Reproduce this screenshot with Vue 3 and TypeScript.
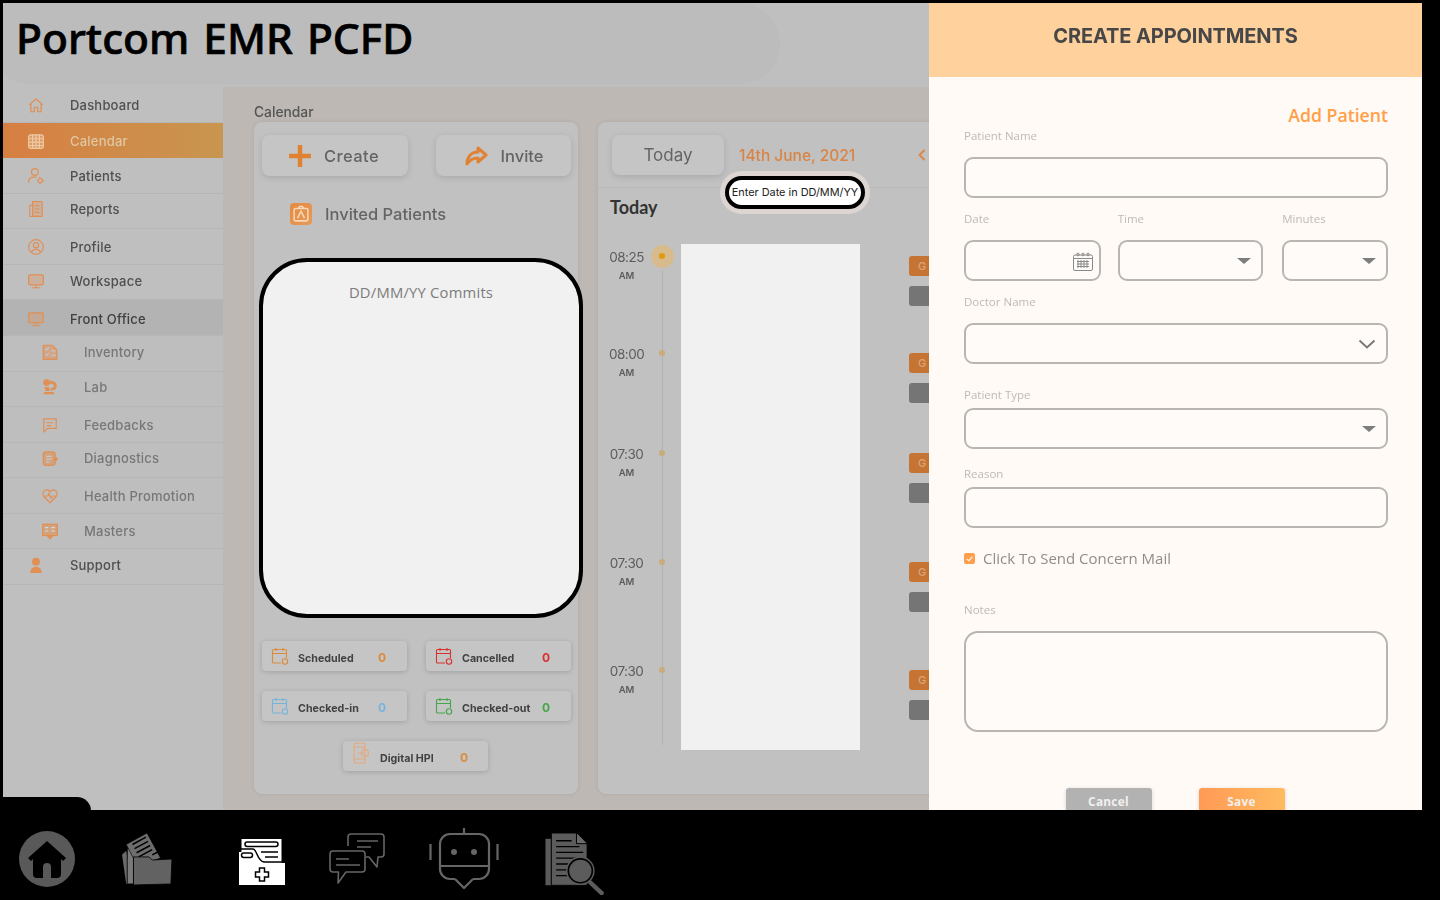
<script setup lang="ts">
const navItems = [
  { label: 'Dashboard', icon: 'home', shift: 'down' },
  { label: 'Calendar', icon: 'calendar', active: true, shift: 'down' },
  { label: 'Patients', icon: 'patient', shift: 'down' },
  { label: 'Reports', icon: 'report', shift: 'up' },
  { label: 'Profile', icon: 'profile' },
  { label: 'Workspace', icon: 'monitor', shift: 'up' },
  { label: 'Front Office', icon: 'monitor', open: true, shift: 'down' },
  { label: 'Inventory', icon: 'inventory', sub: true, shift: 'up' },
  { label: 'Lab', icon: 'lab', sub: true, shift: 'up' },
  { label: 'Feedbacks', icon: 'chat', sub: true, shift: 'down' },
  { label: 'Diagnostics', icon: 'diag', sub: true, shift: 'up' },
  { label: 'Health Promotion', icon: 'heart', sub: true, shift: 'down' },
  { label: 'Masters', icon: 'masters', sub: true },
  { label: 'Support', icon: 'support', shift: 'up' },
]

const stats = [
  { label: 'Scheduled', color: '#dc8a3c' },
  { label: 'Cancelled', color: '#d9322e' },
  { label: 'Checked-in', color: '#76b4dc' },
  { label: 'Checked-out', color: '#45a64a' },
]

const slots = ['08:25', '08:00', '07:30', '07:30', '07:30']
</script>

<template>
  <div class="screen">
    <div class="stage">
      <div class="dimmed">
        <header class="topbar">
          <div class="title-blob"></div>
          <h1 class="title">Portcom EMR PCFD</h1>
        </header>
        <div class="body">
          <nav class="sidebar">
            <div
              v-for="item in navItems"
              :key="item.label"
              class="nav-row"
              :class="[item.shift, { active: item.active, open: item.open, sub: item.sub }]"
            >
              <svg class="nav-icon" viewBox="0 0 16 16" fill="none" stroke="currentColor" stroke-width="1.1">
                <path v-if="item.icon === 'home'" d="M2 8l6-5.500L14 8M3.500 7v7h3v-4h3v4h3V7" />
                <g v-else-if="item.icon === 'calendar'">
                  <rect x="1.500" y="2.500" width="13" height="12" rx="2" fill="currentColor" fill-opacity=".35" />
                  <path d="M1.500 6h13M5 2.500v12M8 2.500v12M11 2.500v12M1.500 9h13M1.500 12h13" />
                </g>
                <g v-else-if="item.icon === 'patient'">
                  <circle cx="7" cy="4.500" r="3" />
                  <path d="M1.500 14v-1.500c0-2 2-3.500 4-3.500h3M11.500 9.500l3 2.500-3 2.500-2-2.500z" />
                </g>
                <g v-else-if="item.icon === 'report'">
                  <path d="M5 1.500h7.500a1 1 0 0 1 1 1V14.500H5z" fill="currentColor" fill-opacity=".3" />
                  <path d="M2.500 4.500H5M2.500 4.500v10H12M7 5h4M7 8h4M7 11h4" />
                </g>
                <g v-else-if="item.icon === 'profile'">
                  <circle cx="8" cy="8" r="6.500" />
                  <circle cx="8" cy="6.500" r="2.300" />
                  <path d="M3.800 12.800c1-2 2.500-2.800 4.200-2.800s3.200.8 4.200 2.800" />
                </g>
                <g v-else-if="item.icon === 'monitor'">
                  <rect x="1.500" y="2.500" width="13" height="9" rx="1" fill="currentColor" fill-opacity=".3" />
                  <path d="M8 11.500v2.500M4.500 14h7" />
                </g>
                <g v-else-if="item.icon === 'inventory'">
                  <path d="M2 2h8l4 4v8.500H2z" fill="currentColor" fill-opacity=".55" />
                  <path d="M4 5l1 1 2-2M4 10l1 1 2-2M9 7h4M9 11h4" stroke="#c4c4c4" />
                </g>
                <g v-else-if="item.icon === 'lab'" fill="currentColor" stroke="none">
                  <circle cx="5" cy="4" r="3" />
                  <path d="M8 2.500c3.500 0 6 1.500 6 4.500s-2.500 4-5 4l-1-2c2 0 3.500-.5 3.500-2S10 5 8 5z" />
                  <path d="M3 8h4l1 3.500H4zM2.500 12.500h9v2h-9z" />
                </g>
                <path v-else-if="item.icon === 'chat'" d="M2.500 2.500h11v8.500H6L2.500 14zM5 6h6M5 8.500h4" />
                <g v-else-if="item.icon === 'diag'">
                  <rect x="2" y="2.500" width="10.500" height="12" rx="2" fill="currentColor" fill-opacity=".6" />
                  <path d="M4.500 6.500h5M4.500 9h5M4.500 11.500h3" stroke="#c8c8c8" />
                  <circle cx="13" cy="9" r="1.800" fill="currentColor" stroke="none" />
                </g>
                <g v-else-if="item.icon === 'masters'">
                  <rect x="1.500" y="2" width="13" height="10" fill="currentColor" fill-opacity=".6" />
                  <path d="M3.500 5h3M3.500 8h3M9 5h3.500M9 8h3.500" stroke="#d8d8d8" />
                  <path d="M5.500 12L8 15l2.500-3" fill="currentColor" />
                </g>
                <g v-else-if="item.icon === 'support'" fill="currentColor" stroke="none">
                  <circle cx="8" cy="5" r="3.500" />
                  <path d="M3 15c0-3.500 2-5.500 5-5.500s5 2 5 5.500z" />
                </g>
                <path v-else d="M8 14L2.500 8.500C.5 6 2.500 2.500 5 2.500c1.300 0 2.300.7 3 1.800.7-1.100 1.700-1.800 3-1.800 2.500 0 4.500 3.500 2.500 6zM3 8h3l1-2 2 4 1-2h3" />
              </svg>
              <span class="nav-label">{{ item.label }}</span>
            </div>
          </nav>

          <main class="content">
            <div class="crumb">Calendar</div>
            <div class="cards">
              <section class="card card-left">
                <div class="btn-row">
                  <div class="soft-btn create">
                    <svg class="plus" viewBox="0 0 24 24"><path d="M12 1v22M1 12h22" stroke="#e08233" stroke-width="4.500" /></svg>
                    <span>Create</span>
                  </div>
                  <div class="soft-btn invite">
                    <svg class="share" viewBox="0 0 24 24" fill="none" stroke="#e08233" stroke-width="3" stroke-linejoin="round">
                      <path d="M14 4l8 7-8 7v-4c-5 0-8 1.500-11 6 0-7 4-12 11-12z" />
                    </svg>
                    <span>Invite</span>
                  </div>
                </div>
                <div class="invited">
                  <span class="invited-icon">
                    <svg viewBox="0 0 16 16" fill="none" stroke="#f6d8b8" stroke-width="1.100">
                      <rect x="3" y="4" width="10" height="9" rx="1" />
                      <path d="M5.500 11l2.500-5 2.500 5M6 4l1-1.500h2L10 4" />
                    </svg>
                  </span>
                  <span>Invited Patients</span>
                </div>
                <div class="commits">DD/MM/YY Commits</div>
                <div class="stats">
                  <div v-for="s in stats" :key="s.label" class="stat">
                    <svg class="stat-icon" viewBox="0 0 18 18" fill="none" :stroke="s.color" stroke-width="1.100">
                      <path d="M10 16H2.500a1 1 0 0 1-1-1V3.500a1 1 0 0 1 1-1h12a1 1 0 0 1 1 1V11M1.500 6.500h14M5 1v3M12 1v3" />
                      <circle cx="14" cy="14.500" r="2.700" />
                    </svg>
                    <span class="stat-label">{{ s.label }}</span>
                    <span class="stat-count" :style="{ color: s.color }">0</span>
                  </div>
                  <div class="stat stat-wide">
                    <svg class="stat-icon hpi" viewBox="0 0 18 22" fill="none" stroke="#e6a878" stroke-width="1.100">
                      <rect x="2" y="1" width="11" height="20" rx="2" />
                      <path d="M2 5h11M2 17h11M6 11h6" />
                      <circle cx="13" cy="11" r="3.500" />
                    </svg>
                    <span class="stat-label">Digital HPI</span>
                    <span class="stat-count hpi-count">0</span>
                  </div>
                </div>
              </section>

              <section class="card card-right">
                <div class="day-head">
                  <div class="soft-btn today">Today</div>
                  <span class="day-date">14th June, 2021</span>
                  <svg class="prev" viewBox="0 0 8 12" fill="none" stroke="#dd8443" stroke-width="1.800"><path d="M6.500 1L1.500 6l5 5" /></svg>
                </div>
                <div class="today-title">Today</div>
                <div class="timeline">
                  <div class="rail"></div>
                  <div v-for="(t, i) in slots" :key="i" class="slot" :class="'slot-' + i">
                    <div class="slot-time">
                      <div class="hour">{{ t }}</div>
                      <div class="ampm">AM</div>
                    </div>
                    <div class="dot-wrap" :class="{ current: i === 0 }"><span class="dot"></span></div>
                    <div class="slot-tags">
                      <span class="tag tag-orange">G</span>
                      <span class="tag tag-gray"></span>
                    </div>
                  </div>
                  <div class="blank"></div>
                </div>
                <div class="date-pill"><span>Enter Date in DD/MM/YY</span></div>
              </section>
            </div>
          </main>
        </div>
      </div>

      <aside class="panel">
        <div class="panel-head">CREATE APPOINTMENTS</div>
        <form class="form">
          <div class="add-patient">Add Patient</div>
          <label class="lbl lbl-name">Patient Name</label>
          <div class="field"></div>

          <div class="triple">
            <div class="col col-date">
              <label class="lbl">Date</label>
              <div class="field">
                <svg class="cal" viewBox="0 0 22 20" fill="none" stroke="#8a8a8a" stroke-width="1">
                  <rect x="1.500" y="3" width="19" height="15.500" rx="1.500" />
                  <path d="M1.500 6.500h19M5 9.500h12M5 12h12M5 14.500h12M6 8v8M9 8v8M12 8v8M15 8v8" />
                  <circle cx="6" cy="2.500" r="1.300" /><circle cx="11" cy="2.500" r="1.300" /><circle cx="16" cy="2.500" r="1.300" />
                </svg>
              </div>
            </div>
            <div class="col col-time">
              <label class="lbl">Time</label>
              <div class="field"><span class="caret"></span></div>
            </div>
            <div class="col col-min">
              <label class="lbl">Minutes</label>
              <div class="field"><span class="caret"></span></div>
            </div>
          </div>

          <label class="lbl lbl-doctor">Doctor Name</label>
          <div class="field">
            <svg class="chev" viewBox="0 0 18 10" fill="none" stroke="#757575" stroke-width="1.800"><path d="M1.500 1.500L9 8.500l7.500-7" /></svg>
          </div>

          <label class="lbl lbl-type">Patient Type</label>
          <div class="field"><span class="caret"></span></div>

          <label class="lbl lbl-reason">Reason</label>
          <div class="field"></div>

          <div class="check-row">
            <span class="check">
              <svg viewBox="0 0 10 10" fill="none" stroke="#ffe9d2" stroke-width="1.200"><path d="M2.500 5.200l1.800 1.800 3.300-3.600" /></svg>
            </span>
            <span>Click To Send Concern Mail</span>
          </div>

          <label class="lbl lbl-notes">Notes</label>
          <div class="field notes"></div>

          <div class="actions">
            <div class="action cancel">Cancel</div>
            <div class="action save">Save</div>
          </div>
        </form>
      </aside>
    </div>

    <footer class="dock">
      <div class="dock-tab"></div>
      <svg class="dk dk-home" viewBox="0 0 56 56">
        <circle cx="28" cy="28" r="28" fill="#595959" />
        <path d="M28 10L9 27l3 3 2-2v15a4 4 0 0 0 4 4h6V36a4 4 0 0 1 8 0v11h6a4 4 0 0 0 4-4V28l2 2 3-3z" fill="#000" />
      </svg>
      <svg class="dk dk-folder" viewBox="4 3 48 50">
        <path d="M8 20l-4 4 4 28h6z" fill="#6a6a6a" />
        <path d="M9 18h6v34H9z" fill="#7a7a7a" stroke="#000" stroke-width=".8" />
        <path d="M8 14L28 3l13 24-22 8z" fill="#6d6d6d" stroke="#000" stroke-width=".6" />
        <path d="M14 14l13-7M16 18l13-7M18 22l13-7M20 26l13-7M33 24l6-3" stroke="#000" stroke-width="1.500" />
        <path d="M15 26h15l3 3 19-1-1 24-36 1z" fill="#626262" stroke="#000" stroke-width=".8" />
      </svg>
      <svg class="dk dk-chart" viewBox="0 0 46 46">
        <rect x="2.500" y="0" width="40" height="24" fill="#fff" />
        <rect x="0" y="13" width="18" height="33" fill="#fff" />
        <rect x="0" y="24" width="46" height="22" fill="#fff" />
        <rect x="6" y="3" width="33" height="4.500" rx="2.200" fill="#fff" stroke="#000" stroke-width="1.500" />
        <rect x="2.500" y="14" width="11" height="4.500" rx="2.200" fill="#fff" stroke="#000" stroke-width="1.500" />
        <path d="M0 10h14c4 0 4 12 11 13h21M22 13h17M26 18h13" fill="none" stroke="#000" stroke-width="1.500" />
        <path d="M20.500 29h5v4h4v5h-4v4h-5v-4h-4v-5h4z" fill="#fff" stroke="#000" stroke-width="1.500" />
      </svg>
      <svg class="dk dk-chat" viewBox="0 0 56 54" fill="none" stroke="#666" stroke-width="1.600" stroke-linejoin="round">
        <path d="M22 2h30a3 3 0 0 1 3 3v17a3 3 0 0 1-3 3h-3l-1 10-8-10h-3" fill="#000" />
        <path d="M22 2a3 3 0 0 0-3 3v9" />
        <path d="M4 19h29a3 3 0 0 1 3 3v15a3 3 0 0 1-3 3H17l-8 11 .5-11H4a3 3 0 0 1-3-3V22a3 3 0 0 1 3-3z" fill="#000" />
        <path d="M28 9h21M28 15h14M7 27h13M7 33h24" />
      </svg>
      <svg class="dk dk-bot" viewBox="0 0 70 61" fill="none" stroke="#666" stroke-width="2.200" stroke-linejoin="round">
        <path d="M35 0v6M1.500 16v16M68.500 16v16" />
        <rect x="11" y="6" width="49" height="45" rx="10" />
        <path d="M11 38h49" />
        <path d="M26 51h18" stroke="#000" stroke-width="3" />
        <path d="M26 51l9 9 9-9" />
        <circle cx="25" cy="24" r="3" fill="#666" stroke="none" />
        <circle cx="45" cy="24" r="3" fill="#666" stroke="none" />
      </svg>
      <svg class="dk dk-search" viewBox="0 0 62 64">
        <path d="M0 6h6v46h32v2H0z" fill="#5a5a5a" />
        <path d="M6 0h26l11 11v43H6z" fill="#5c5c5c" stroke="#000" stroke-width="1" />
        <path d="M32 0v11h11" fill="#6a6a6a" stroke="#000" stroke-width="1" />
        <path d="M11 8h16M11 14h24M11 20h28M11 26h24M11 32h16M11 38h14M11 44h14" stroke="#000" stroke-width="1.300" />
        <path d="M43 48l15 14" stroke="#5c5c5c" stroke-width="4.500" stroke-linecap="round" />
        <circle cx="36" cy="39" r="14" fill="#000" stroke="#5c5c5c" stroke-width="1.500" />
        <circle cx="36" cy="39" r="11.500" fill="#5c5c5c" />
      </svg>
    </footer>
  </div>
</template>

<style>
html, body {
  margin: 0;
  background: #000;
}
</style>

<style scoped>
.screen {
  position: relative;
  width: 1440px;
  height: 900px;
  overflow: hidden;
  background: #000;
  font-family: "Inter", "Liberation Sans", sans-serif;
}

.stage {
  display: flex;
  height: 807px;
  padding: 3px 18px 0 3px;
  overflow: hidden;
}

.dimmed {
  width: 926px;
  flex: none;
  display: flex;
  flex-direction: column;
  background: #bfbfbf;
}

.topbar {
  position: relative;
  height: 84px;
  flex: none;
  overflow: hidden;
}

.title-blob {
  position: absolute;
  left: -6px;
  top: 0;
  width: 783px;
  height: 81px;
  background: #bcbcbc;
  border-radius: 0 40px 40px 30px;
}

.title {
  position: relative;
  margin: 8px 0 0 13px;
  font: 500 42.500px/54px "Noto Sans", sans-serif;
  word-spacing: 3px;
  color: #000;
  -webkit-text-stroke: 0.7px #000;
  white-space: nowrap;
}

.body {
  flex: 1;
  display: flex;
  min-height: 0;
}

.sidebar {
  width: 220px;
  flex: none;
  background: #bfbfbf;
}

.nav-row {
  height: 35.570px;
  box-sizing: border-box;
  display: flex;
  align-items: center;
  padding-left: 24px;
  border-bottom: 1px solid #b6b6b6;
  color: #e09055;
  font: 500 13px "Inter", sans-serif;
  letter-spacing: .2px;
  filter: blur(0.4px);
}

.nav-row.up {
  padding-bottom: 3px;
}

.nav-row.down {
  padding-top: 2px;
}

.nav-row.active {
  background: linear-gradient(90deg, #d77f42, #c8964f);
  color: #eec9a3;
  border-bottom: none;
}

.nav-row.open {
  background: #b3b3b3;
}

.nav-row.sub {
  padding-left: 38px;
  background: #bebebe;
}

.nav-icon {
  width: 18px;
  height: 18px;
  flex: none;
}

.nav-label {
  margin-left: 25px;
  color: #4f4f4f;
}

.active .nav-label {
  color: #dfc7a3;
}

.open .nav-label {
  color: #3f3f3f;
}

.sub .nav-label {
  margin-left: 25px;
  color: #777;
}

.content {
  flex: 1;
  min-width: 0;
  background: #bdb8b4;
  padding: 17px 0 0 31px;
  overflow: hidden;
}

.crumb {
  font: 500 13.800px/16px "Inter", sans-serif;
  color: #555;
  filter: blur(0.3px);
}

.cards {
  display: flex;
  gap: 20px;
  margin-top: 2px;
}

.card {
  height: 672px;
  background: #c1c1c1;
  border-radius: 8px;
  box-sizing: border-box;
  box-shadow: 0 0 4px rgba(0, 0, 0, .08);
}

.card-left {
  width: 324px;
  flex: none;
  padding: 13px 7px 0 8px;
}

.card-right {
  position: relative;
  flex: 1;
  min-width: 0;
  margin-right: -12px;
  padding: 13px 0 0 14px;
}

.btn-row {
  display: flex;
  justify-content: space-between;
}

.soft-btn {
  display: flex;
  align-items: center;
  justify-content: center;
  height: 41px;
  border-radius: 8px;
  background: #c5c5c5;
  box-shadow: 0 2px 6px rgba(0, 0, 0, .12);
  font: 500 16.500px "Inter", sans-serif;
  color: #646464;
  filter: blur(0.4px);
}

.create {
  width: 146px;
  gap: 12px;
  padding-right: 3px;
  box-sizing: border-box;
  letter-spacing: .4px;
}

.invite {
  width: 135px;
  gap: 13px;
}

.plus {
  width: 24px;
  height: 24px;
}

.share {
  width: 24px;
  height: 24px;
}

.invited {
  display: flex;
  align-items: center;
  gap: 13px;
  margin: 26px 0 0 28px;
  font: 500 16.500px/24px "Inter", sans-serif;
  color: #646464;
  filter: blur(0.4px);
}

.invited-icon {
  width: 22px;
  height: 22px;
  border-radius: 4px;
  background: linear-gradient(135deg, #e58b40, #e59a58);
  display: flex;
}

.invited-icon svg {
  width: 22px;
  height: 22px;
}

.commits {
  width: 324px;
  height: 360px;
  box-sizing: border-box;
  margin: 32px 0 0 -3px;
  padding-top: 21px;
  border: 4px solid #000;
  border-radius: 48px;
  background: #f1f1f1;
  text-align: center;
  font: 400 14.800px/18px "Open Sans", sans-serif;
  letter-spacing: .2px;
  color: #7c7c7c;
}

.stats {
  display: grid;
  grid-template-columns: 145px 145px;
  column-gap: 19px;
  row-gap: 20px;
  margin-top: 23px;
}

.stat {
  height: 30px;
  display: flex;
  align-items: center;
  padding-left: 9px;
  border-radius: 4px;
  background: #c5c5c5;
  box-shadow: 0 1px 5px rgba(0, 0, 0, .17);
  font: 700 10.700px "Inter", sans-serif;
  filter: blur(0.4px);
}

.stat-wide {
  grid-column: 1 / 3;
  justify-self: center;
  width: 145px;
  box-sizing: border-box;
  margin-right: 2px;
}

.stat-icon {
  width: 18px;
  height: 18px;
  flex: none;
}

.stat-icon.hpi {
  width: 18px;
  height: 22px;
  margin-bottom: 6px;
}

.stat-label {
  margin: 4px 0 0 9px;
  width: 80px;
  color: #424242;
  white-space: nowrap;
}

.stat-count {
  font-size: 12px;
  margin-top: 2px;
}

.stat-wide .stat-label {
  margin-left: 10px;
  width: 80px;
}

.hpi-count {
  color: #dc8a3c;
}

.day-head {
  position: relative;
  display: flex;
  align-items: center;
  height: 40px;
  margin-left: -14px;
  padding: 0 0 12px 14px;
  border-bottom: 1px solid #b9b9b9;
}

.today {
  width: 112px;
  height: 40px;
  flex: none;
  font-weight: 400;
  font-size: 17px;
}

.day-date {
  margin-left: 15px;
  font: 500 15.500px "Inter", sans-serif;
  color: #d98444;
  filter: blur(0.3px);
}

.prev {
  width: 8px;
  height: 12px;
  margin-left: 63px;
}

.today-title {
  margin: 7px 0 0 -2px;
  font: 700 18px/24px "Lato", sans-serif;
  color: #333;
}

.timeline {
  position: relative;
  height: 540px;
  margin-top: 15px;
}

.rail {
  position: absolute;
  left: 50px;
  top: 36px;
  bottom: 29px;
  width: 1px;
  background: #b2b2b2;
}

.slot {
  position: absolute;
  left: -3px;
  right: 0;
  height: 50px;
  display: flex;
}

.slot-0 { top: 14px; }
.slot-1 { top: 111px; }
.slot-2 { top: 211px; }
.slot-3 { top: 320px; }
.slot-4 { top: 428px; }

.slot-time {
  width: 35px;
  text-align: center;
  color: #5c5c5c;
  flex: none;
  filter: blur(0.3px);
}

.hour {
  font: 400 13.500px/18px "Inter", sans-serif;
  letter-spacing: -.5px;
}

.ampm {
  font: 600 9.500px/14px "Inter", sans-serif;
  margin-top: 3px;
}

.dot-wrap {
  position: absolute;
  left: 53px;
  top: 8px;
  width: 0;
  height: 0;
}

.dot {
  position: absolute;
  left: -3px;
  top: -3px;
  width: 6px;
  height: 6px;
  border-radius: 50%;
  background: #c9ab7c;
}

.current::before {
  content: "";
  position: absolute;
  left: -11px;
  top: -11px;
  width: 23px;
  height: 23px;
  border-radius: 50%;
  background: #d8bb8c;
}

.current .dot {
  background: #e09a10;
}

.slot-tags {
  position: absolute;
  left: 300px;
  top: 8px;
  display: flex;
  flex-direction: column;
  gap: 10px;
}

.tag {
  display: block;
  width: 40px;
  height: 20px;
  border-radius: 3px;
  box-sizing: border-box;
  padding-left: 9px;
  font: 500 11px/20px "Inter", sans-serif;
}

.tag-orange {
  background: #c57433;
  color: #dba678;
}

.tag-gray {
  background: #757575;
}

.blank {
  position: absolute;
  left: 69px;
  top: 10px;
  width: 179px;
  height: 506px;
  background: #f1f1f1;
}

.date-pill {
  position: absolute;
  left: 122px;
  top: 49px;
  padding: 5px;
  border-radius: 22px;
  background: #dcd5d1;
}

.date-pill span {
  display: block;
  width: 140px;
  box-sizing: border-box;
  height: 33px;
  border: 4px solid #000;
  border-radius: 17px;
  background: #fff;
  font: 400 10.900px/25px "Inter", sans-serif;
  text-align: center;
  white-space: nowrap;
  color: #222;
}

.panel {
  width: 493px;
  flex: none;
  background: #fffaf6;
  overflow: hidden;
}

.panel-head {
  height: 74px;
  box-sizing: border-box;
  padding-top: 19px;
  background: #ffd19c;
  text-align: center;
  font: 700 20px/28px "Inter", sans-serif;
  letter-spacing: -.1px;
  color: #474747;
  filter: blur(0.3px);
}

.form {
  padding: 0 34px 0 35px;
}

.add-patient {
  margin-top: 26px;
  text-align: right;
  font: 600 17.700px/24px "Open Sans", sans-serif;
  color: #ffa048;
}

.lbl {
  display: block;
  font: 400 11.500px/14px "Open Sans", sans-serif;
  color: #bdbab7;
  filter: blur(0.2px);
}

.lbl-name {
  margin-top: 2px;
  margin-bottom: 14px;
}

.field {
  position: relative;
  height: 41px;
  box-sizing: border-box;
  border: 2px solid #b9b6b2;
  border-radius: 9px;
  background: #fffbf8;
}

.triple {
  display: flex;
  margin-top: 14px;
}

.triple .lbl {
  margin-bottom: 14px;
}

.col-date {
  width: 137px;
}

.col-time {
  width: 146px;
  margin-left: 17px;
}

.col-min {
  width: 106px;
  margin-left: 19px;
}

.cal {
  position: absolute;
  right: 5px;
  top: 10px;
  width: 22px;
  height: 20px;
}

.caret {
  position: absolute;
  right: 10px;
  top: 16px;
  width: 0;
  height: 0;
  border-left: 7px solid transparent;
  border-right: 7px solid transparent;
  border-top: 6px solid #7d7d7d;
}

.chev {
  position: absolute;
  right: 10px;
  top: 14px;
  width: 18px;
  height: 10px;
}

.lbl-doctor {
  margin-top: 14px;
  margin-bottom: 14px;
}

.lbl-type {
  margin-top: 24px;
  margin-bottom: 6px;
}

.lbl-reason {
  margin-top: 18px;
  margin-bottom: 6px;
}

.check-row {
  display: flex;
  align-items: center;
  gap: 8px;
  margin-top: 20px;
  font: 500 15px/20px "Open Sans", sans-serif;
  color: #8f8d8b;
  filter: blur(0.2px);
}

.check {
  display: flex;
  width: 11px;
  height: 11px;
  border-radius: 2px;
  background: #ff9f4c;
}

.check svg {
  width: 11px;
  height: 11px;
}

.lbl-notes {
  margin-top: 35px;
  margin-bottom: 14px;
}

.notes {
  height: 101px;
  border-radius: 14px;
}

.actions {
  display: flex;
  justify-content: center;
  gap: 47px;
  margin-top: 56px;
  padding-right: 2px;
}

.action {
  width: 86px;
  height: 30px;
  border-radius: 3px;
  box-sizing: border-box;
  padding-top: 5px;
  text-align: center;
  font: 700 11.800px/16px "Open Sans", sans-serif;
  letter-spacing: .3px;
  color: #f2f0ee;
  box-shadow: 0 1px 4px rgba(0, 0, 0, .15);
}

.cancel {
  background: #b2b2b2;
}

.save {
  background: linear-gradient(90deg, #ff9a55, #ffbb60);
}

.dock {
  position: relative;
  height: 90px;
  box-sizing: border-box;
  display: flex;
  align-items: flex-start;
  background: #000;
}

.dock-tab {
  position: absolute;
  left: 0;
  top: -13px;
  width: 91px;
  height: 14px;
  background: #000;
  border-radius: 0 14px 0 0;
}

.dk {
  flex: none;
  display: block;
}

.dk-home {
  width: 56px;
  height: 56px;
  margin: 21px 0 0 19px;
}

.dk-folder {
  width: 52px;
  height: 52px;
  margin: 23px 0 0 46px;
}

.dk-chart {
  width: 46px;
  height: 46px;
  margin: 29px 0 0 66px;
}

.dk-chat {
  width: 56px;
  height: 54px;
  margin: 22px 0 0 44px;
}

.dk-bot {
  width: 70px;
  height: 61px;
  margin: 18px 0 0 44px;
}

.dk-search {
  width: 61px;
  height: 62px;
  margin: 23px 0 0 46px;
}
</style>
